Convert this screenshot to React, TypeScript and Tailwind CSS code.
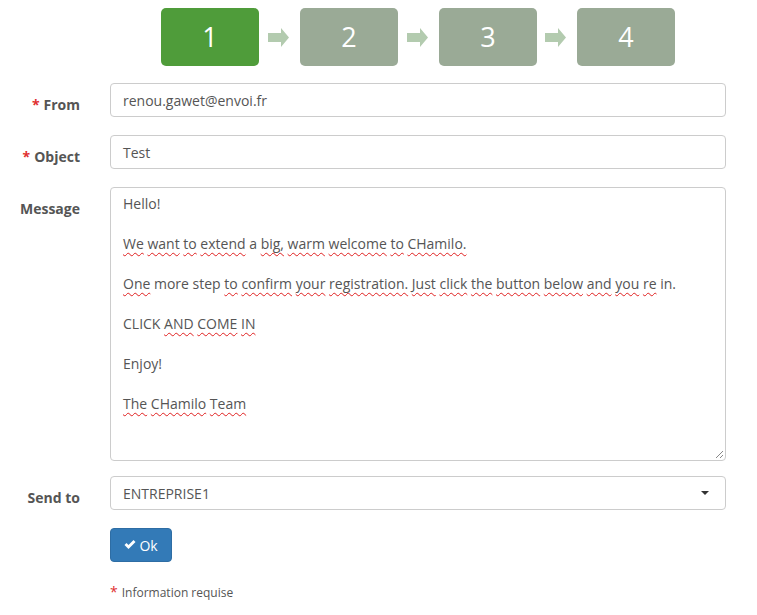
import React from "react";

const W = ({ children }: { children: React.ReactNode }) => (
  <span className="underline decoration-wavy decoration-[#e02020] decoration-1 underline-offset-[3px]">{children}</span>
);

function Arrow() {
  return (
    <svg width="22" height="19" viewBox="0 0 22 19" className="block">
      <polygon points="0,5 13,5 13,0 21,9.5 13,19 13,14 0,14" fill="#b3cbaf" />
    </svg>
  );
}

function Step({ n, active }: { n: number; active?: boolean }) {
  return (
    <div
      className={`w-[98px] h-[58px] rounded-[5px] flex items-center justify-center text-white text-[27px] ${
        active ? "bg-[#4f9c3a]" : "bg-[#9aaa96]"
      }`}
    >
      {n}
    </div>
  );
}

function Label({ text, req }: { text: string; req?: boolean }) {
  return (
    <div className="w-[80px] shrink-0 text-right pt-[12px] text-[14px] leading-[20px] font-bold text-[#555]">
      {req && <span className="text-[#e03030] mr-[4px]">*</span>}
      {text}
    </div>
  );
}

export default function App() {
  return (
    <div className="w-[757px] h-[615px] bg-white font-['Open_Sans',sans-serif] text-[#555] text-[14px]">
      <div className="flex items-center pt-[8px] pl-[161px]">
        <Step n={1} active />
        <div className="w-[41px] flex justify-center pr-[2px]"><Arrow /></div>
        <Step n={2} />
        <div className="w-[41px] flex justify-center pr-[2px]"><Arrow /></div>
        <Step n={3} />
        <div className="w-[40px] flex justify-center pr-[2px]"><Arrow /></div>
        <Step n={4} />
      </div>

      <div className="mt-[17px] flex flex-col gap-[18px]">
        <div className="flex gap-[30px]">
          <Label text="From" req />
          <div className="w-[616px] h-[34px] border border-[#ccc] rounded-[4px] px-[12px] flex items-center text-[14px] text-[#555]">
            renou.gawet@envoi.fr
          </div>
        </div>
        <div className="flex gap-[30px]">
          <Label text="Object" req />
          <div className="w-[616px] h-[34px] border border-[#ccc] rounded-[4px] px-[12px] flex items-center text-[14px] text-[#555]">
            Test
          </div>
        </div>
        <div className="flex gap-[30px]">
          <Label text="Message" />
          <div className="relative w-[616px] h-[274px] border border-[#ccc] rounded-[4px] px-[12px] py-[6px] text-[14px] leading-[20px] text-[#555]">
            <div>Hello!</div>
            <div>&nbsp;</div>
            <div>
              <W>We</W> <W>want</W> <W>to</W> <W>extend</W> a <W>big,</W> <W>warm</W> <W>welcome</W> <W>to</W> <W>CHamilo.</W>
            </div>
            <div>&nbsp;</div>
            <div>
              <W>One</W> more step <W>to</W> <W>confirm</W> <W>your</W> <W>registration.</W> <W>Just</W> <W>click</W> <W>the</W>{" "}
              <W>button</W> <W>below</W> <W>and</W> <W>you</W> <W>re</W> in.
            </div>
            <div>&nbsp;</div>
            <div>
              CLICK <W>AND</W> <W>COME</W> <W>IN</W>
            </div>
            <div>&nbsp;</div>
            <div>Enjoy!</div>
            <div>&nbsp;</div>
            <div>
              <W>The</W> <W>CHamilo</W> <W>Team</W>
            </div>
            <svg className="absolute right-[1px] bottom-[1px]" width="10" height="10" viewBox="0 0 10 10">
              <line x1="2" y1="9" x2="9" y2="2" stroke="#888" strokeWidth="1" />
              <line x1="6" y1="9" x2="9" y2="6" stroke="#888" strokeWidth="1" />
            </svg>
          </div>
        </div>
        <div className="flex gap-[30px] -mt-[3px]">
          <Label text="Send to" />
          <div className="w-[616px] h-[34px] border border-[#ccc] rounded-[4px] pl-[12px] pr-[16px] flex items-center justify-between text-[14px] text-[#555]">
            <span>ENTREPRISE1</span>
            <svg width="8" height="4" viewBox="0 0 8 4">
              <polygon points="0,0 8,0 4,4" fill="#333" />
            </svg>
          </div>
        </div>
      </div>

      <div className="ml-[110px] mt-[18px]">
        <button className="h-[34px] w-[62px] rounded-[4px] bg-[#337ab7] border border-[#2e6da4] text-white text-[14px] flex items-center justify-center gap-[3px]">
          <svg width="12" height="10" viewBox="0 0 12 10">
            <path d="M0.5 5 L2.5 3 L4.5 5 L9.5 0 L11.5 2 L4.5 9 Z" fill="white" />
          </svg>
          Ok
        </button>
        <div className="mt-[21px] text-[12px] text-[#555] leading-[17px]">
          <span className="text-[#e03030] text-[14px] mr-[4px]">*</span>Information requise
        </div>
      </div>
    </div>
  );
}
